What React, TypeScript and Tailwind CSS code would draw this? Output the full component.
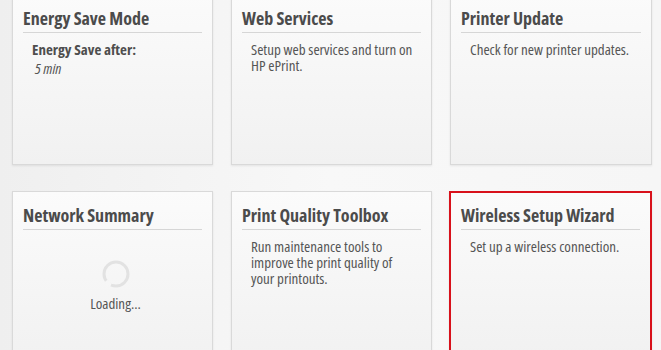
import React from 'react';

const font = { fontFamily: "'Open Sans', sans-serif", fontStretch: 'condensed' };

function Card({ title, active, children }: { title: string; active?: boolean; children?: React.ReactNode }) {
  return (
    <div
      className={
        'h-[171px] flex flex-col bg-gradient-to-b from-[#fbfbfb] to-[#f1f1f1] shadow-[0_1px_2px_rgba(0,0,0,0.08)] ' +
        (active ? 'border-2 border-[#d8111b] -ml-px' : 'border border-[#d9d9d9]')
      }
    >
      <div className="px-[10px]">
        <div className={'border-b border-[#d6d6d6] ' + (active ? 'h-[37px] pt-[11px]' : 'h-[38px] pt-[12px]')}>
          <h2 className="text-[18px] leading-[22px] font-bold text-[#4b4b4b]">{title}</h2>
        </div>
      </div>
      <div className="pl-[19px] pr-[15px] pt-[8px] text-[15px] leading-[16px] text-[#555]">{children}</div>
    </div>
  );
}

function Spinner() {
  return (
    <svg width="30" height="30" viewBox="0 0 30 30">
      <circle cx="15" cy="15" r="12" fill="none" stroke="#e2e2e2" strokeWidth="3" />
      <path d="M5 22 A12 12 0 0 0 10 26" fill="none" stroke="#f6f6f6" strokeWidth="4" />
    </svg>
  );
}

export default function App() {
  return (
    <div className="w-[661px] h-[350px] overflow-hidden bg-gradient-to-r from-[#efefef] via-[#f8f8f8] to-[#f6f6f6]" style={font}>
      <div className="grid grid-cols-[201px_201px_202px] gap-x-[18px] gap-y-[26px] pl-[12px] -mt-[6px]">
        <Card title="Energy Save Mode">
          <div className="font-bold text-[#4e4e4e]">Energy Save after:</div>
          <div className="italic pl-[3px] mt-[3px]">5 min</div>
        </Card>
        <Card title="Web Services">
          Setup web services and turn on HP ePrint.
        </Card>
        <Card title="Printer Update">Check for new printer updates.</Card>
        <Card title="Network Summary">
          <div className="flex flex-col items-center pt-[21px] pl-[2px]">
            <Spinner />
            <div className="mt-[6px] text-[#555]">Loading...</div>
          </div>
        </Card>
        <Card title="Print Quality Toolbox">
          Run maintenance tools to improve the print quality of your printouts.
        </Card>
        <Card title="Wireless Setup Wizard" active>
          Set up a wireless connection.
        </Card>
      </div>
    </div>
  );
}
